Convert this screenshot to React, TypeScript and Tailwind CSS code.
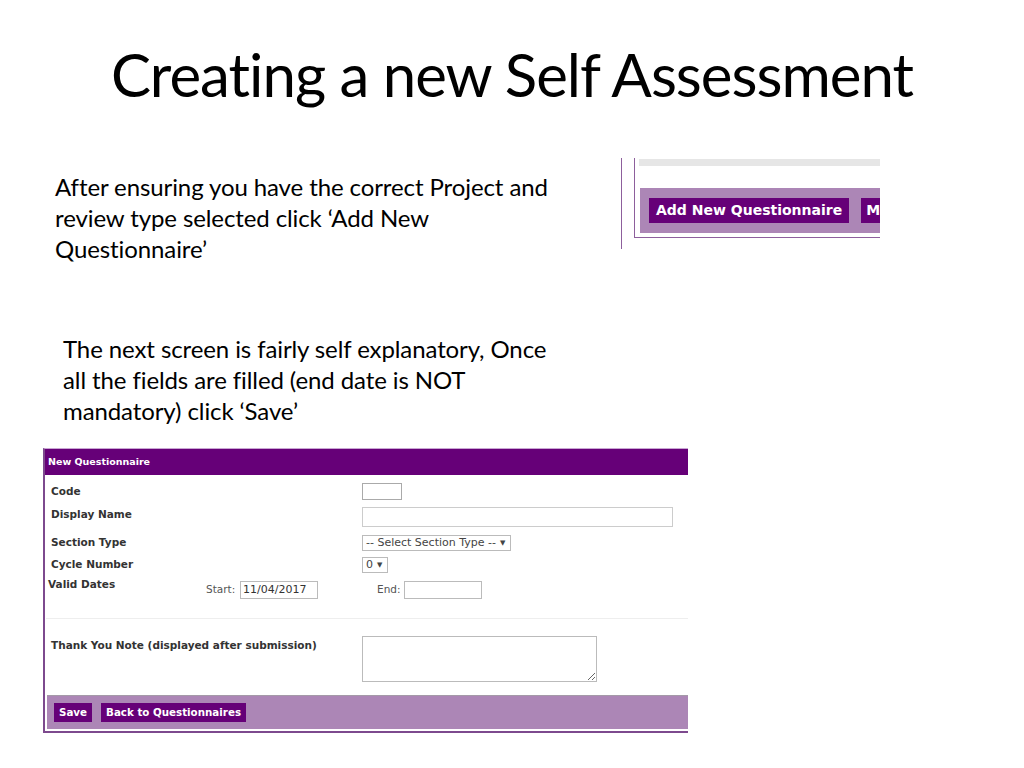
import React from "react";

const ui = { fontFamily: '"DejaVu Sans", Verdana, sans-serif' };

const MiniShot = () => (
  <div className="w-[259px] h-[91px] mt-[8px] ml-[66px] flex overflow-hidden border-l border-[#8d5f9c]">
    <div className="ml-[12px] w-[260px] h-[80px] shrink-0 flex flex-col border-l border-b border-[#8d5f9c]">
      <div className="ml-[4px] mt-[1px] h-[7px] bg-[#e6e6e6]" />
      <div className="ml-[5px] mt-[22px] h-[45px] bg-[#ac86b6] flex items-center gap-[12px] pl-[9px]">
        <div className="h-[25px] px-[7px] flex items-center bg-[#660078] text-white font-bold text-[14px] whitespace-nowrap" style={ui}>
          Add New Questionnaire
        </div>
        <div className="h-[25px] pl-[5px] pr-[7px] flex items-center bg-[#660078] text-white font-bold text-[14px] whitespace-nowrap" style={ui}>
          M
        </div>
      </div>
    </div>
  </div>
);

const Label = ({ children, className = "" }: { children: React.ReactNode; className?: string }) => (
  <div className={`w-[311px] shrink-0 font-bold text-[10.5px] text-[#333] ${className}`}>{children}</div>
);

const Select = ({ text, width }: { text: string; width: string }) => (
  <div className={`${width} h-[16px] border border-[#bbb] bg-white flex items-center pl-[3px] gap-[4px] text-[11px] text-[#444] whitespace-nowrap`}>
    <span>{text}</span>
    <span className="text-[7px]">▼</span>
  </div>
);

const QuestionnaireForm = () => (
  <div className="ml-[43px] mt-[22px] w-[645px] h-[285px] border-l-2 border-b-2 border-[#7d4a8e] border-t border-t-[#c9a6d3] flex flex-col" style={ui}>
    <div className="h-[26px] bg-[#660078] flex items-center pl-[3px] text-white font-bold text-[9.5px]">New Questionnaire</div>

    <div className="pl-[6px] flex flex-col">
      <div className="mt-[8px] h-[17px] flex items-center">
        <Label>Code</Label>
        <div className="w-[40px] h-[17px] border border-[#aaa]" />
      </div>
      <div className="mt-[7px] h-[20px] flex items-center">
        <Label className="-mt-[4px]">Display Name</Label>
        <div className="w-[311px] h-[20px] border border-[#ccc]" />
      </div>
      <div className="mt-[8px] h-[16px] flex items-center">
        <Label>Section Type</Label>
        <Select text="-- Select Section Type --" width="w-[149px]" />
      </div>
      <div className="mt-[6px] h-[16px] flex items-center">
        <Label>Cycle Number</Label>
        <Select text="0" width="w-[26px]" />
      </div>
      <div className="mt-[8px] h-[18px] flex items-center">
        <div className="w-[158px] -ml-[3px] -mt-[10px] shrink-0 font-bold text-[10.5px] text-[#333]">Valid Dates</div>
        <span className="text-[10.5px] text-[#555] w-[34px]">Start:</span>
        <div className="w-[78px] h-[18px] border border-[#bbb] flex items-center pl-[2px] text-[11px] text-[#333]">11/04/2017</div>
        <span className="ml-[59px] text-[10.5px] text-[#555] w-[27px]">End:</span>
        <div className="w-[78px] h-[18px] border border-[#bbb]" />
      </div>
    </div>

    <div className="mt-[19px] ml-[1px] h-[1px] bg-[#eeeeee]" />

    <div className="pl-[6px] mt-[17px] h-[46px] flex items-start">
      <Label className="mt-[2px]">Thank You Note (displayed after submission)</Label>
      <textarea readOnly className="w-[235px] h-[46px] border border-[#bbb] bg-white outline-none" />
    </div>

    <div className="mt-[13px] ml-[2px] h-[34px] bg-[#ac86b6] border-t border-[#a49aa8] flex items-center gap-[9px] pl-[7px]">
      <div className="h-[19px] px-[5px] flex items-center bg-[#660078] text-white font-bold text-[10.3px]">Save</div>
      <div className="h-[19px] px-[5px] flex items-center bg-[#660078] text-white font-bold text-[10.3px]">Back to Questionnaires</div>
    </div>
  </div>
);

export default function App() {
  return (
    <div className="w-[1024px] h-[768px] bg-white overflow-hidden text-black" style={{ fontFamily: 'Lato, "Open Sans", sans-serif' }}>
      <h1 className="pt-[44px] h-[150px] text-center text-[60px] leading-[60px] tracking-[-1px]">
        Creating a new Self Assessment
      </h1>

      <div className="flex h-[183px]">
        <p className="ml-[55px] mt-[21px] w-[500px] text-[24px] leading-[31px] tracking-[-0.1px]">
          After ensuring you have the correct Project and review type selected click ‘Add New Questionnaire’
        </p>
        <MiniShot />
      </div>

      <p className="ml-[63px] w-[490px] text-[24px] leading-[31px] tracking-[-0.1px]">
        The next screen is fairly self explanatory, Once all the fields are filled (end date is NOT mandatory) click ‘Save’
      </p>

      <QuestionnaireForm />
    </div>
  );
}
